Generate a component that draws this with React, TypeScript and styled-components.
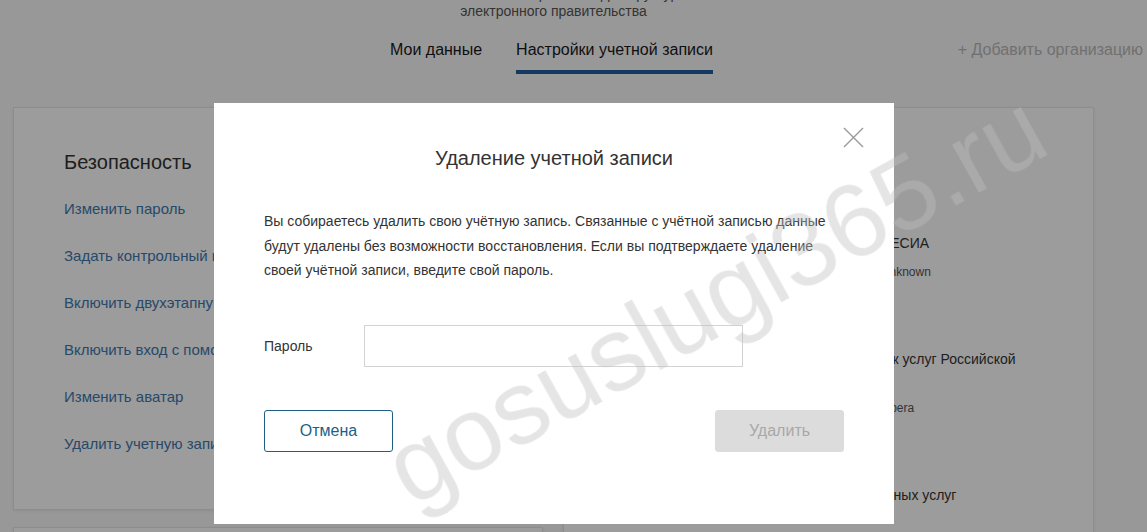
import styled, { createGlobalStyle } from "styled-components";

const GlobalStyle = createGlobalStyle`
  html, body {
    margin: 0;
    padding: 0;
  }
  body {
    background: #f9f9f9;
    font-family: "Liberation Sans", Arial, sans-serif;
    color: #333;
    overflow: hidden;
  }
`;

const Page = styled.div`
  width: 1147px;
  height: 532px;
  overflow: hidden;
`;

const Header = styled.header`
  display: flex;
  flex-direction: column;
  align-items: center;
  width: 1081px;
  margin: -14px 0 0 13px;
  font-size: 14px;
  line-height: 17px;
  color: #555;
`;

const NavRow = styled.nav`
  display: grid;
  grid-template-columns: 377px auto 1fr;
  align-items: start;
  width: 1130px;
  margin: 20px 0 0 13px;
`;

const Tabs = styled.div`
  display: flex;
  gap: 34px;
`;

const Tab = styled.a<{ $active?: boolean }>`
  font-size: 16px;
  line-height: 20px;
  color: #1a1a1a;
  padding-bottom: 10px;
  border-bottom: 4px solid ${(p) => (p.$active ? "#1f5e9e" : "transparent")};
  cursor: pointer;
`;

const AddLink = styled.a`
  grid-column: 3;
  justify-self: end;
  font-size: 16px;
  line-height: 20px;
  color: #b8b8b8;
`;

const Main = styled.main`
  display: grid;
  grid-template-columns: 530px 531px;
  gap: 20px;
  margin: 33px 0 0 13px;
`;

const Column = styled.div`
  display: flex;
  flex-direction: column;
  gap: 17px;
`;

const Card = styled.section<{ $height: number }>`
  box-sizing: border-box;
  height: ${(p) => p.$height}px;
  padding: 42px 50px;
  background: #fff;
  border: 1px solid #e6e6e6;
  box-shadow: 0 1px 3px rgba(0, 0, 0, 0.08);
`;

const CardTitle = styled.h2`
  margin: 0;
  font-size: 20px;
  line-height: 24px;
  font-weight: normal;
  color: #333;
`;

const LinkList = styled.div`
  display: flex;
  flex-direction: column;
  gap: 27px;
  margin-top: 25px;
`;

const CardLink = styled.a`
  font-size: 15px;
  line-height: 20px;
  color: #3f78ad;
  white-space: nowrap;
`;

const Events = styled.div`
  display: flex;
  flex-direction: column;
  gap: 69px;
  margin-top: 59px;
`;

const EventRow = styled.div`
  display: grid;
  grid-template-columns: 160px 1fr;
`;

const EventDate = styled.div`
  font-size: 12px;
  line-height: 20px;
  color: #888;
`;

const EventTitle = styled.div`
  font-size: 14px;
  line-height: 20px;
  color: #333;
`;

const EventSub = styled.div`
  margin-top: 11px;
  font-size: 12px;
  line-height: 16px;
  color: #555;
`;

const Overlay = styled.div`
  position: fixed;
  inset: 0;
  box-sizing: border-box;
  display: flex;
  justify-content: center;
  align-items: flex-start;
  padding: 103px 39px 0 0;
  background: rgba(0, 0, 0, 0.39);
`;

const Modal = styled.div`
  position: relative;
  box-sizing: border-box;
  width: 680px;
  padding: 43px 50px 72px;
  background: #fff;
`;

const CloseButton = styled.button`
  position: absolute;
  top: 24px;
  right: 30px;
  width: 21px;
  height: 21px;
  padding: 0;
  border: 0;
  background: none;
  cursor: pointer;
`;

const ModalTitle = styled.h3`
  margin: 0;
  text-align: center;
  font-size: 20px;
  line-height: 24px;
  font-weight: normal;
  color: #333;
`;

const ModalText = styled.p`
  margin: 39px 0 0;
  font-size: 14px;
  line-height: 24.5px;
  color: #333;
`;

const FieldRow = styled.label`
  display: grid;
  grid-template-columns: 100px 379px;
  align-items: center;
  margin-top: 42px;
  font-size: 14px;
  color: #333;
`;

const Input = styled.input`
  box-sizing: border-box;
  height: 42px;
  border: 1px solid #d3d3d3;
  outline: none;
  padding: 0 12px;
  font: inherit;
`;

const Actions = styled.div`
  display: flex;
  justify-content: space-between;
  margin-top: 43px;
`;

const Button = styled.button<{ $variant: "outline" | "disabled" }>`
  width: 129px;
  height: 42px;
  border-radius: 3px;
  font-family: inherit;
  font-size: 16px;
  border: 1px solid ${(p) => (p.$variant === "outline" ? "#1d5f87" : "#dcdcdc")};
  background: ${(p) => (p.$variant === "outline" ? "#fff" : "#dcdcdc")};
  color: ${(p) => (p.$variant === "outline" ? "#1d5f87" : "#a8a8a8")};
`;

const Watermark = styled.div`
  position: fixed;
  left: 715px;
  top: 298px;
  transform: translate(-50%, -50%) rotate(-29deg);
  font-size: 104px;
  line-height: 1;
  white-space: nowrap;
  color: rgba(190, 190, 190, 0.4);
  pointer-events: none;
`;

const securityLinks = [
  "Изменить пароль",
  "Задать контрольный вопрос",
  "Включить двухэтапную проверку",
  "Включить вход с помощью электронной подписи",
  "Изменить аватар",
  "Удалить учетную запись",
];

const events = [
  {
    date: "25.03.2021 14:32",
    title: "Успешный вход в ЕСИА",
    sub: "Windows, браузер: Unknown",
  },
  {
    date: "24.03.2021 19:05",
    title: "Использован поиск услуг Российской Федерации",
    sub: "Windows, браузер: Opera",
  },
  {
    date: "22.03.2021 10:47",
    title: "Заказ муниципальных услуг",
  },
];

export default function App() {
  return (
    <Page>
      <GlobalStyle />
      <Header>
        <span>Учетная запись портала инфраструктуры</span>
        <span>электронного правительства</span>
      </Header>
      <NavRow>
        <span />
        <Tabs>
          <Tab>Мои данные</Tab>
          <Tab $active>Настройки учетной записи</Tab>
        </Tabs>
        <AddLink>+ Добавить организацию</AddLink>
      </NavRow>
      <Main>
        <Column>
          <Card $height={403}>
            <CardTitle>Безопасность</CardTitle>
            <LinkList>
              {securityLinks.map((l) => (
                <CardLink key={l}>{l}</CardLink>
              ))}
            </LinkList>
          </Card>
          <Card $height={200}>
            <CardTitle>Подписки</CardTitle>
          </Card>
        </Column>
        <Column>
          <Card $height={560}>
            <CardTitle>Последние действия</CardTitle>
            <Events>
              {events.map((e) => (
                <EventRow key={e.date}>
                  <EventDate>{e.date}</EventDate>
                  <div>
                    <EventTitle>{e.title}</EventTitle>
                    {e.sub && <EventSub>{e.sub}</EventSub>}
                  </div>
                </EventRow>
              ))}
            </Events>
          </Card>
        </Column>
      </Main>

      <Overlay>
        <Modal>
          <CloseButton aria-label="Закрыть">
            <svg width="21" height="21" viewBox="0 0 21 21">
              <path d="M1 1L20 20M20 1L1 20" stroke="#9a9a9a" strokeWidth="1.4" fill="none" />
            </svg>
          </CloseButton>
          <ModalTitle>Удаление учетной записи</ModalTitle>
          <ModalText>
            Вы собираетесь удалить свою учётную запись. Связанные с учётной записью данные
            будут удалены без возможности восстановления. Если вы подтверждаете удаление
            своей учётной записи, введите свой пароль.
          </ModalText>
          <FieldRow>
            <span>Пароль</span>
            <Input type="password" />
          </FieldRow>
          <Actions>
            <Button $variant="outline">Отмена</Button>
            <Button $variant="disabled" disabled>
              Удалить
            </Button>
          </Actions>
        </Modal>
      </Overlay>
      <Watermark>gosuslugi365.ru</Watermark>
    </Page>
  );
}
